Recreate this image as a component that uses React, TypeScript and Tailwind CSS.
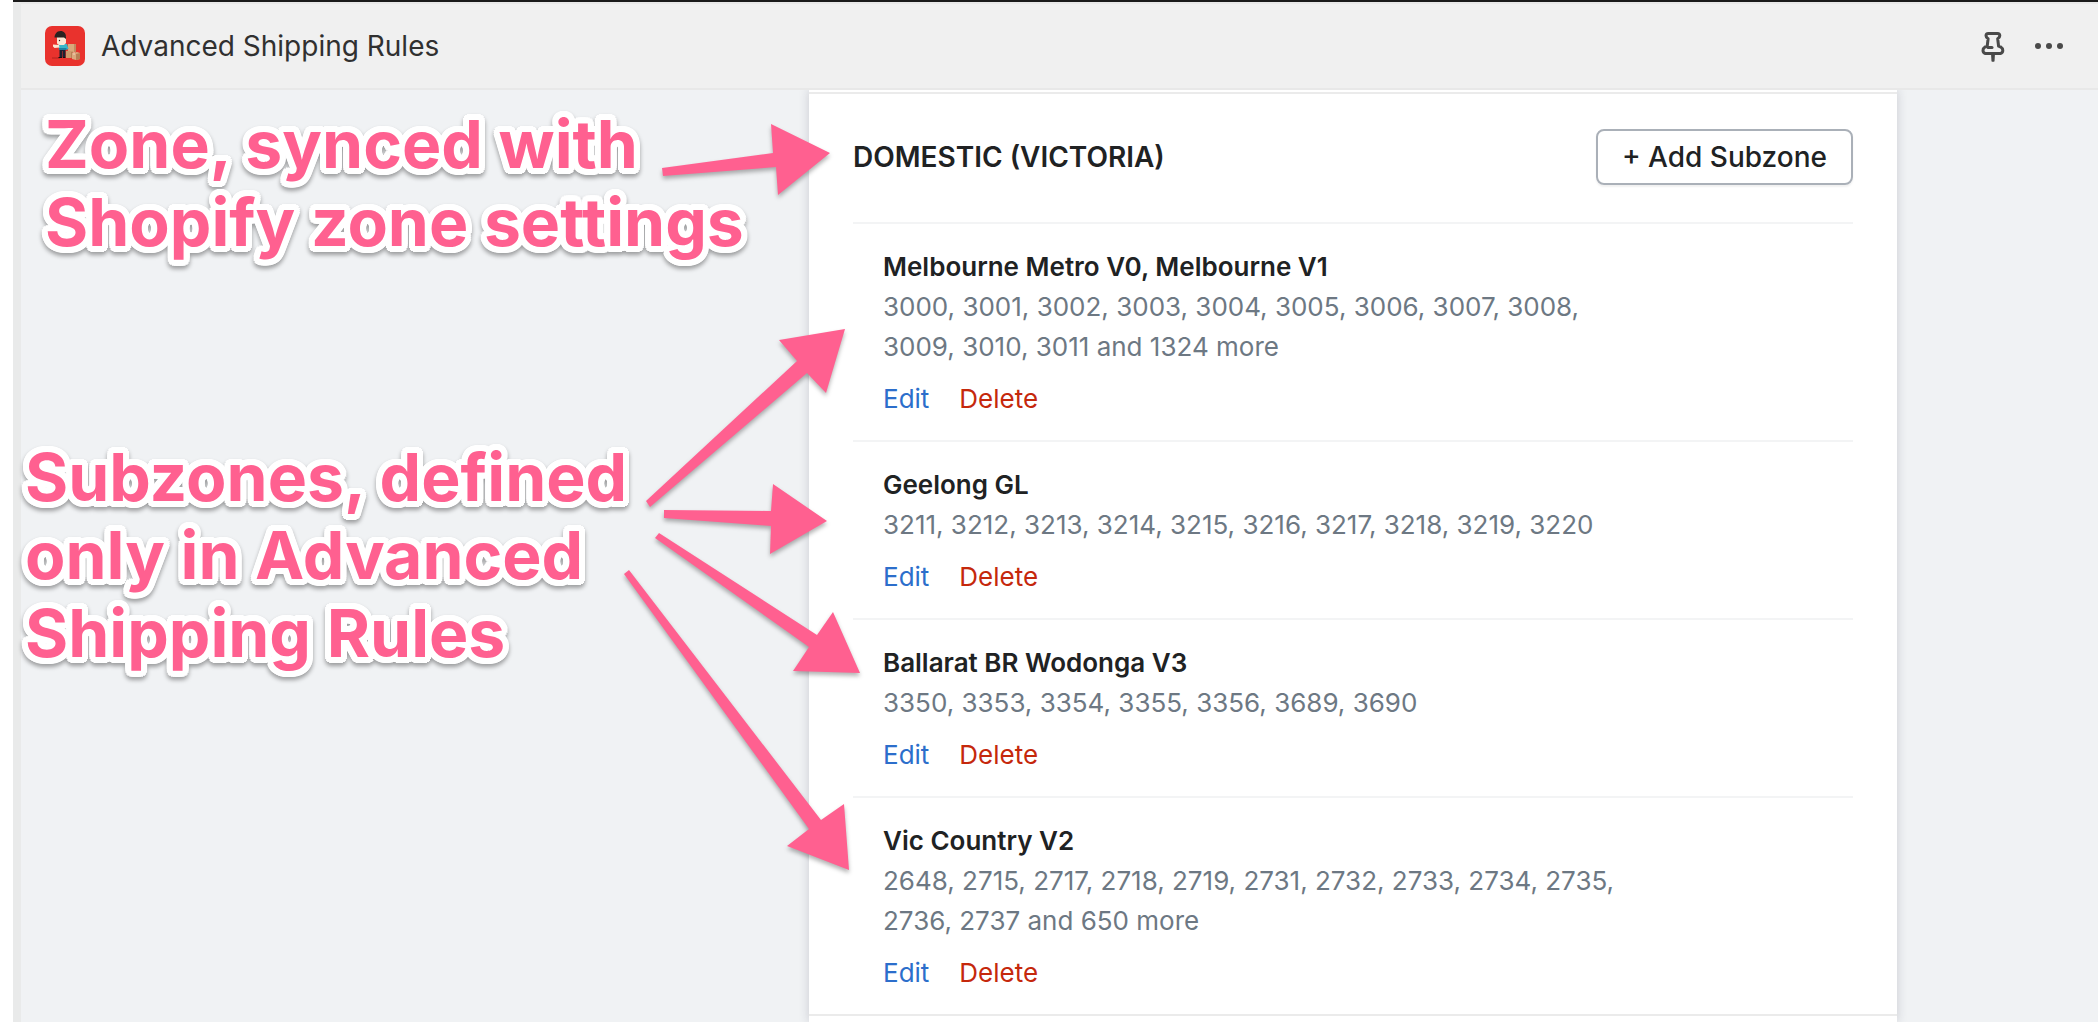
import { Fragment } from 'react'

type Subzone = {
  name: string
  postcodes: string
}

const subzones: Subzone[] = [
  {
    name: 'Melbourne Metro V0, Melbourne V1',
    postcodes:
      '3000, 3001, 3002, 3003, 3004, 3005, 3006, 3007, 3008, 3009, 3010, 3011 and 1324 more',
  },
  {
    name: 'Geelong GL',
    postcodes: '3211, 3212, 3213, 3214, 3215, 3216, 3217, 3218, 3219, 3220',
  },
  {
    name: 'Ballarat BR Wodonga V3',
    postcodes: '3350, 3353, 3354, 3355, 3356, 3689, 3690',
  },
  {
    name: 'Vic Country V2',
    postcodes:
      '2648, 2715, 2717, 2718, 2719, 2731, 2732, 2733, 2734, 2735, 2736, 2737 and 650 more',
  },
]

// from the notes to the zone heading, then to each subzone
const arrows = [
  '662,168 773,153 771,124 830,153 778,195 776,167 663,176',
  '646,501 797,361 779,340 845,329 826,393 807,373 650,507',
  '664,510 771,511 773,484 827,521 770,554 771,526 664,518',
  '659,533 817,635 833,612 860,673 793,671 809,647 655,538',
  '629,570 821,820 844,804 849,870 787,846 809,829 624,574',
]

function AppLogo() {
  return (
    <svg aria-hidden="true" className="h-10 w-10" viewBox="0 0 40 40">
      <rect fill="#e9322d" height="40" rx="7" width="40" />
      {/* boxes */}
      <rect fill="#d9a77b" height="8" width="8" x="23" y="18" />
      <rect fill="#c08a60" height="8" width="2" x="29" y="18" />
      <rect fill="#cf9a6c" height="7" width="7" x="21" y="25" />
      <rect fill="#b98058" height="6" width="2" x="26" y="26" />
      <path d="M27 27l5-1 3 1v6l-4 1-4-1z" fill="#dba97e" />
      <path d="M31 28l4-1v6l-4 1z" fill="#b97f55" />
      <path d="M29 26v3" stroke="#f1d5b8" />
      {/* courier */}
      <path d="M7 32h8" stroke="#b3231f" />
      <path d="M14.500 22h6v9h-2.500v-6h-.5v6h-3z" fill="#1d2030" />
      <path d="M14 31h3v1h-4zM18 31h2.500v1h-3z" fill="#111" />
      <path d="M13.500 18h8.500l1.500 5-2 .5v.5h-7.500z" fill="#38b6c8" />
      <path d="M14 22h7.500v2h-7.500z" fill="#1c7fa0" />
      <path d="M14 19l-6-.5v2l1.500 1.500 5-.5z" fill="#fbe6d4" />
      <path d="M12 10h9v7l-2 2h-5l-2-1.500z" fill="#fbe6d4" />
      <path d="M9.500 11.500c0-3 2-6.500 6-6.500 3.500 0 5.500 2.500 5.500 6v2l-2-1.500z" fill="#2b2220" />
      <circle cx="14.500" cy="14.500" fill="#2b2220" r=".7" />
    </svg>
  )
}

function PinIcon() {
  return (
    <svg
      aria-hidden="true"
      className="h-8 w-6"
      fill="none"
      stroke="#4a4a4a"
      strokeLinecap="round"
      strokeLinejoin="round"
      strokeWidth="3"
      viewBox="0 0 24 32"
    >
      <path d="M7.500 3.500h9q2.300 0 2.300 2.300 0 1.600-2.100 3l.9 7.400 2.200.8q2 1.200 2 3.500t-2.300 3h-15.200q-2.300-.7-2.300-3t2-3.500l2.200-.8.900-7.400q-2.100-1.400-2.100-3 0-2.300 2.300-2.300z" />
      <path d="M7 17.500h4" />
      <path d="M10.800 24h2.400l-.4 7h-1.600z" fill="#4a4a4a" strokeWidth="1.500" />
    </svg>
  )
}

function MoreIcon() {
  return (
    <svg aria-hidden="true" className="h-8 w-7" fill="#4a4a4a" viewBox="0 0 28 32">
      <circle cx="3" cy="16" r="3" />
      <circle cx="14" cy="16" r="3" />
      <circle cx="25" cy="16" r="3" />
    </svg>
  )
}

// The ring of white text shadows gives the letters a rounded outline.
function Note({ lines }: { lines: string[] }) {
  return (
    <p className="text-[66px] leading-[78px] font-bold whitespace-nowrap text-[#ff6090] [text-shadow:6px_0_white,6px_2px_white,5px_4px_white,4px_5px_white,2px_6px_white,0_6px_white,-2px_6px_white,-4px_5px_white,-5px_4px_white,-6px_2px_white,-6px_0_white,-6px_-2px_white,-5px_-4px_white,-4px_-5px_white,-2px_-6px_white,0_-6px_white,2px_-6px_white,4px_-5px_white,5px_-4px_white,6px_-2px_white] [filter:drop-shadow(0_3px_2px_rgb(0_0_0/0.35))]">
      {lines.map((line) => (
        <Fragment key={line}>
          {line}
          <br />
        </Fragment>
      ))}
    </p>
  )
}

function SubzoneItem({ subzone }: { subzone: Subzone }) {
  return (
    <li className="border-t-2 border-[#f3f4f5] px-[30px] pt-[23px] pb-[21px] text-[26px] leading-10">
      <h3 className="font-semibold text-[#202223]">{subzone.name}</h3>
      <p className="max-w-[740px] text-[#6d7883]">{subzone.postcodes}</p>
      <div className="mt-3 flex gap-[30px]">
        <button className="text-[#2c6ecb]" type="button">
          Edit
        </button>
        <button className="text-[#c5280c]" type="button">
          Delete
        </button>
      </div>
    </li>
  )
}

export default function App() {
  return (
    <div className="relative flex h-screen overflow-hidden bg-white pl-[13px] font-['Inter',sans-serif]">
      <div className="flex min-w-0 flex-1 flex-col border-t-2 border-[#1a1a1a] bg-[#f0f2f4]">
        <div className="flex min-h-0 flex-1 flex-col border-l-8 border-[#e9eaea]">
          <header className="relative z-10 flex h-[88px] shrink-0 items-center border-y-2 border-[#e8e8e8] bg-[#f0f0f0] pr-[35px] pl-6">
            <AppLogo />
            <h1 className="ml-4 flex-1 text-[28px] text-[#303030]">Advanced Shipping Rules</h1>
            <div className="flex items-center gap-[30px]">
              <button aria-label="Pin app" type="button">
                <PinIcon />
              </button>
              <button aria-label="More actions" type="button">
                <MoreIcon />
              </button>
            </div>
          </header>

          <main className="flex min-h-0 flex-1">
            <div className="flex w-[788px] shrink-0 flex-col gap-[177px] pt-[15px]">
              <div className="pl-6">
                <Note lines={['Zone, synced with', 'Shopify zone settings']} />
              </div>
              <div className="pl-1">
                <Note lines={['Subzones, defined', 'only in Advanced', 'Shipping Rules']} />
              </div>
            </div>

            <section className="mr-[201px] min-w-0 flex-1 bg-white pt-[2px] shadow-[0_0_10px_rgb(31_33_60/0.18)]">
              <div className="border-y-2 border-[#ebebeb] px-11">
                <div className="flex h-32 items-center justify-between pb-0.5">
                  <h2 className="text-[28px] font-semibold text-[#202223]">DOMESTIC (VICTORIA)</h2>
                  <button
                    className="h-14 rounded-lg border-2 border-[#aab0b8] px-6 text-[28px] font-medium text-[#202223] shadow-[0_2px_2px_rgb(0_0_0/0.06)]"
                    type="button"
                  >
                    + Add Subzone
                  </button>
                </div>
                <ul>
                  {subzones.map((subzone) => (
                    <SubzoneItem key={subzone.name} subzone={subzone} />
                  ))}
                </ul>
              </div>
            </section>
          </main>
        </div>
      </div>

      <svg
        aria-hidden="true"
        className="pointer-events-none absolute top-0 left-0 h-[900px] w-[900px] fill-[#ff6090] [filter:drop-shadow(0_3px_2px_rgb(0_0_0/0.3))]"
        viewBox="0 0 900 900"
      >
        {arrows.map((points) => (
          <polygon key={points} points={points} />
        ))}
      </svg>
    </div>
  )
}
